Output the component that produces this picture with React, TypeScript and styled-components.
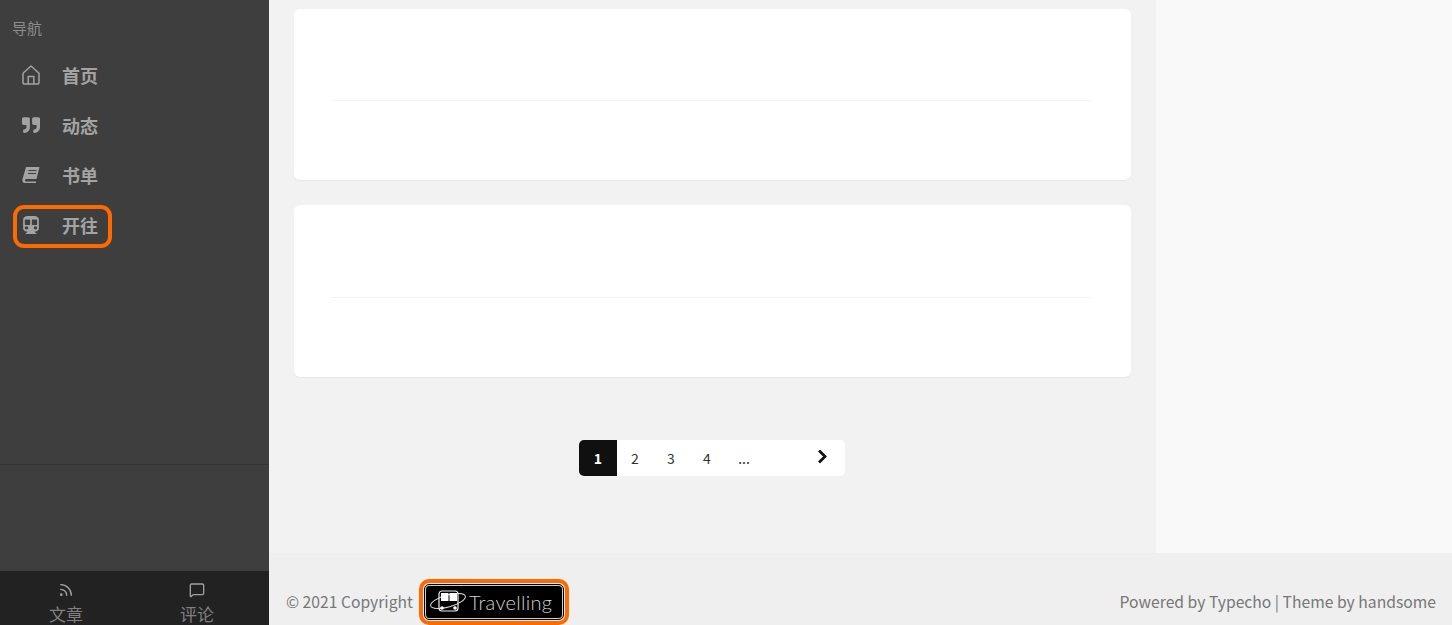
import * as React from "react";
import styled, { createGlobalStyle } from "styled-components";
import { FaChevronRight, FaQuoteRight, FaSubway } from "react-icons/fa";
import { MessageSquare, Rss } from "lucide-react";

const GlobalStyle = createGlobalStyle`
  html, body {
    margin: 0;
    padding: 0;
    height: 625px;
    overflow: hidden;
    background-color: #f2f2f2;
    font-family: "Noto Sans CJK SC", "Noto Sans", sans-serif;
  }
  *, *::after {
    box-sizing: border-box;
  }
`;

const Page = styled.div`
  display: flex;
  width: 1452px;
  height: 625px;
  overflow: hidden;
`;

const Sidebar = styled.aside`
  display: flex;
  flex-direction: column;
  width: 269px;
  flex-shrink: 0;
  background-color: #3e3e3e;
  color: #a3a3a3;
`;

const NavLabel = styled.div`
  padding: 18px 0 0 12px;
  height: 50px;
  font-size: 15px;
  line-height: 19px;
  color: #8c8c8c;
`;

const NavList = styled.nav`
  display: flex;
  flex-direction: column;
  align-items: flex-start;
  flex: 1;
`;

const NavItem = styled.a<{ $marked?: boolean }>`
  position: relative;
  display: flex;
  align-items: center;
  width: 100%;
  height: 50px;
  padding-left: 22px;
  font-size: 18px;
  font-weight: 700;
  color: #a3a3a3;

  ${props =>
    props.$marked
      ? `&::after {
    content: "";
    position: absolute;
    left: 13px;
    top: 5px;
    width: 99px;
    height: 43px;
    border: 4px solid #ff6a00;
    border-radius: 11px;
  }`
      : ""}
`;

const NavIcon = styled.span`
  display: flex;
  align-items: center;
  justify-content: center;
  width: 18px;
  height: 20px;
  margin-right: 22px;
  font-size: 18px;
`;

const SideExtra = styled.div`
  height: 107px;
  border-top: 1px solid #333333;
`;

const Tabs = styled.div`
  display: grid;
  grid-template-columns: 132px 130px;
  height: 54px;
  background-color: #222222;
  overflow: hidden;
`;

const Tab = styled.div`
  display: flex;
  flex-direction: column;
  align-items: center;
  padding-top: 11px;
  font-size: 17px;
  line-height: 24px;
  color: #808080;

  svg {
    display: block;
    margin-bottom: 4px;
    color: #a0a0a0;
  }
`;

const Main = styled.div`
  display: flex;
  flex-direction: column;
  flex: 1;
  min-width: 0;
`;

const Columns = styled.div`
  display: flex;
  height: 553px;
`;

const Content = styled.main`
  display: flex;
  flex-direction: column;
  align-items: center;
  width: 887px;
  padding: 9px 25px 0;
  background-color: #f2f2f2;
`;

const Card = styled.div<{ $height: number }>`
  display: flex;
  flex-direction: column;
  justify-content: center;
  width: 837px;
  height: ${props => props.$height}px;
  margin-bottom: 25px;
  padding: 12px 39px 0 37px;
  background-color: #ffffff;
  border-radius: 6px;
  box-shadow: 0 1px 1px rgba(0, 0, 0, 0.05);
`;

const CardRule = styled.div`
  height: 1px;
  background-color: #f4f4f4;
`;

const Pagination = styled.div`
  display: flex;
  width: 266px;
  height: 36px;
  margin: 38px 1px 0 0;
  background-color: #ffffff;
  border-radius: 5px;
  overflow: hidden;
`;

const PageCell = styled.span<{ $width: number; $active?: boolean }>`
  display: flex;
  align-items: center;
  justify-content: center;
  width: ${props => props.$width}px;
  font-size: 14px;
  font-weight: ${props => (props.$active ? 700 : 400)};
  color: ${props => (props.$active ? "#ffffff" : "#333333")};
  background-color: ${props => (props.$active ? "#101010" : "transparent")};

  svg {
    margin: -3px 0 0 0;
    color: #111111;
    stroke: currentColor;
    stroke-width: 24px;
  }
`;

const RightColumn = styled.aside`
  flex: 1;
  background-color: #f9f9f9;
`;

const Footer = styled.footer`
  display: flex;
  align-items: center;
  justify-content: space-between;
  height: 72px;
  padding: 26px 16px 0 17px;
  background-color: #efefef;
  font-size: 15.7px;
  color: #777777;
`;

const FooterLeft = styled.div`
  display: flex;
  align-items: center;
`;

const FooterText = styled.span`
  margin-bottom: 1px;
`;

const BadgeFrame = styled.div`
  display: flex;
  width: 150px;
  height: 46px;
  margin-left: 6px;
  padding: 2px;
  border: 4px solid #ff6a00;
  border-radius: 10px;
`;

const Badge = styled.div`
  display: flex;
  align-items: center;
  flex: 1;
  padding-left: 4px;
  background-color: #000000;
  border: 1px solid #cccccc;
  outline: 1px solid #000000;
  border-radius: 4px;
  font-family: "Lato", sans-serif;
  font-weight: 300;
  font-size: 20px;
  letter-spacing: 0.3px;
  color: #d0d0d0;
`;

const BadgeLogo = styled.svg`
  flex-shrink: 0;
  margin-right: 1px;
`;

const HomeIcon = () => (
  <svg width="18" height="20" viewBox="0 0 18 20" fill="none" stroke="currentColor" strokeWidth="1.5" strokeLinejoin="round">
    <path d="M1 8.2 9 1l8 7.2v9a1.8 1.8 0 0 1-1.8 1.8H2.8A1.8 1.8 0 0 1 1 17.2z" />
    <path d="M6.2 19v-7.6h5.6V19" />
  </svg>
);

const BookIcon = () => (
  <svg width="18" height="16" viewBox="0 0 18 16">
    <path
      fill="currentColor"
      d="M4 0h13.500L14.500 12h-10c-1.500 0-2 2.500-.5 2.500h10L14 16H3C.5 16 0 14 .5 12z"
    />
    <path stroke="#3e3e3e" strokeWidth="1" d="M6.500 3.500h8M6 6.500h8" />
  </svg>
);

const TravelLogo = () => (
  <BadgeLogo width="38" height="28" viewBox="0 0 38 28">
    <rect x="9" y="3" width="19" height="20" rx="3" fill="#000" stroke="#eee" strokeWidth="1.2" />
    <ellipse cx="18" cy="13" rx="18" ry="6" fill="none" stroke="#ddd" strokeWidth="1" transform="rotate(-16 18 13)" />
    <rect x="11" y="5" width="7.500" height="8" fill="#fff" />
    <rect x="19.500" y="5" width="7.500" height="8" fill="#fff" />
    <circle cx="12" cy="20" r="1.800" fill="#fff" />
    <circle cx="25" cy="20" r="1.800" fill="#fff" />
  </BadgeLogo>
);

const navItems = [
  { label: "首页", icon: <HomeIcon /> },
  { label: "动态", icon: <FaQuoteRight size={18} /> },
  { label: "书单", icon: <BookIcon /> },
  { label: "开往", icon: <FaSubway size={18} />, marked: true }
];

const pages = [
  { label: "1", width: 38, active: true },
  { label: "2", width: 36 },
  { label: "3", width: 36 },
  { label: "4", width: 36 },
  { label: "...", width: 38 },
  { label: "", width: 37 }
];

const App = () => (
  <Page>
    <GlobalStyle />
    <Sidebar>
      <NavLabel>导航</NavLabel>
      <NavList>
        {navItems.map(item => (
          <NavItem key={item.label} $marked={item.marked}>
            <NavIcon>{item.icon}</NavIcon>
            {item.label}
          </NavItem>
        ))}
      </NavList>
      <SideExtra />
      <Tabs>
        <Tab>
          <Rss size={16} />
          文章
        </Tab>
        <Tab>
          <MessageSquare size={16} />
          评论
        </Tab>
      </Tabs>
    </Sidebar>
    <Main>
      <Columns>
        <Content>
          <Card $height={171}>
            <CardRule />
          </Card>
          <Card $height={172}>
            <CardRule />
          </Card>
          <Pagination>
            {pages.map((page, index) => (
              <PageCell key={index} $width={page.width} $active={page.active}>
                {page.label}
              </PageCell>
            ))}
            <PageCell $width={45}>
              <FaChevronRight size={15} />
            </PageCell>
          </Pagination>
        </Content>
        <RightColumn />
      </Columns>
      <Footer>
        <FooterLeft>
          <FooterText>© 2021 Copyright</FooterText>
          <BadgeFrame>
            <Badge>
              <TravelLogo />
              Travelling
            </Badge>
          </BadgeFrame>
        </FooterLeft>
        <FooterText>Powered by Typecho | Theme by handsome</FooterText>
      </Footer>
    </Main>
  </Page>
);

export default App;
